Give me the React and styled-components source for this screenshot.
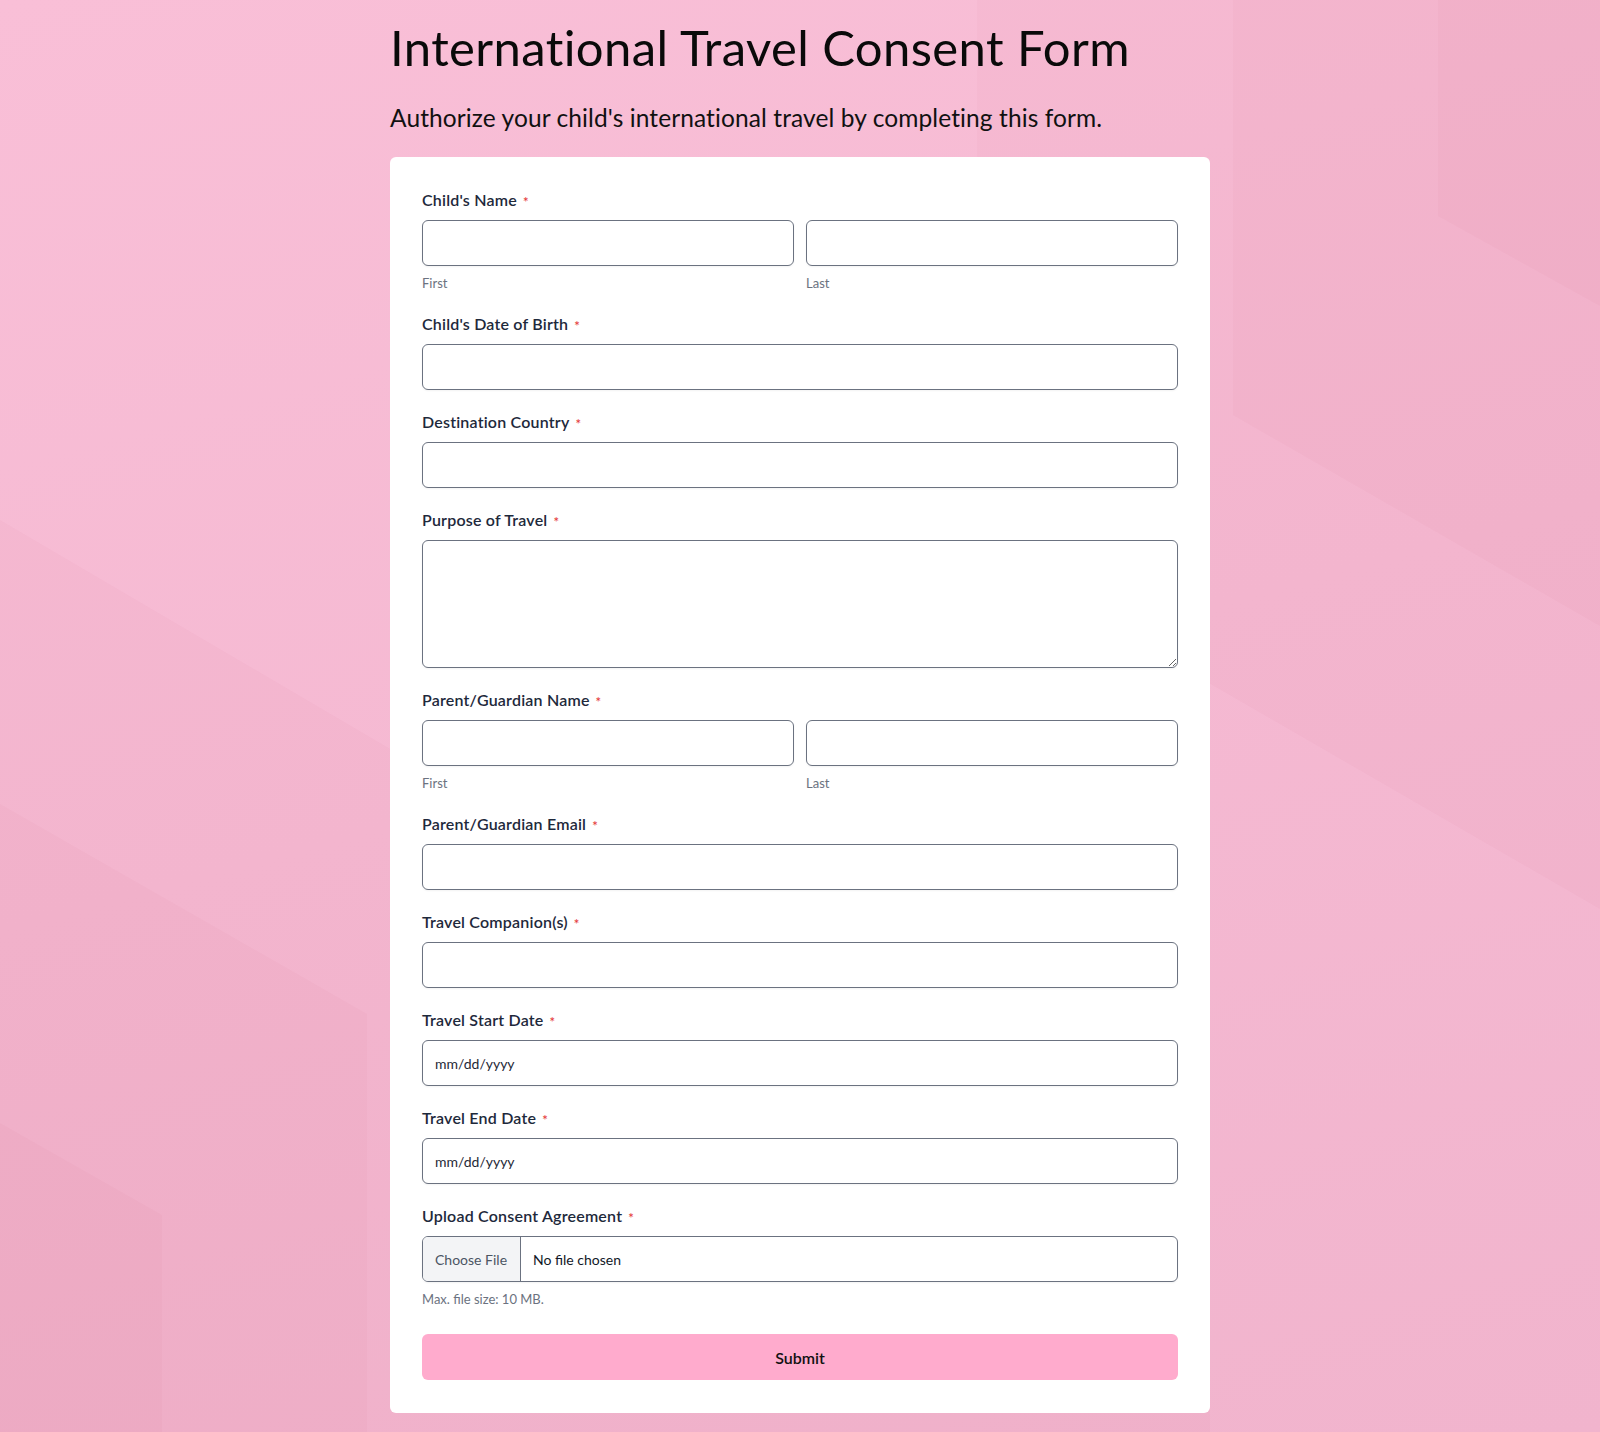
import React from 'react';
import styled, { createGlobalStyle } from 'styled-components';

const GlobalStyle = createGlobalStyle`
  * { box-sizing: border-box; }
  body {
    margin: 0;
    font-family: Lato, "Noto Sans", sans-serif;
    color: #1e293b;
  }
`;

const Page = styled.div`
  position: relative;
  min-height: 1432px;
  overflow: hidden;
  background: linear-gradient(165deg, #f9bfd7 0%, #f5b9d2 50%, #f1b4cd 100%);
`;

const Backdrop = styled.svg`
  position: absolute;
  top: 0;
  left: 0;
  width: 100%;
  height: 100%;
  z-index: 0;
`;

const Wrapper = styled.div`
  position: relative;
  z-index: 1;
  width: 820px;
  margin: 0 auto;
  padding: 18px 0 18px;
`;

const Title = styled.h1`
  margin: 0 0 26px;
  font-size: 49px;
  font-weight: 400;
  line-height: 1.2;
  letter-spacing: 0.4px;
  color: #0a0a0a;
`;

const Subtitle = styled.p`
  margin: 0 0 25px;
  font-size: 24.5px;
  line-height: 1.2;
  letter-spacing: 0.1px;
  color: #111111;
`;

const Card = styled.form`
  background: #ffffff;
  border-radius: 6px;
  padding: 31px 32px 33px;
`;

const Group = styled.div`
  margin-bottom: 20px;
`;

const Label = styled.label`
  display: flex;
  align-items: center;
  height: 24px;
  margin-bottom: 8px;
  font-size: 16px;
  line-height: 24px;
  font-weight: 600;
  letter-spacing: 0.2px;
  color: #1e293b;
`;

const Star = styled.span`
  position: relative;
  top: 2px;
  margin-left: 6px;
  font-size: 13px;
  line-height: 1;
  color: #e53e3e;
`;

const Row = styled.div`
  display: grid;
  grid-template-columns: 1fr 1fr;
  gap: 12px;
`;

const Input = styled.input`
  display: block;
  width: 100%;
  height: 46px;
  padding: 0 12px;
  border: 1px solid #6b7280;
  border-radius: 6px;
  box-shadow: 0 1px 2px rgba(0, 0, 0, 0.05);
  font-family: inherit;
  font-size: 14px;
  color: #1f2937;
  background: #fff;
  outline: none;

  &::placeholder {
    color: #1f2937;
  }
`;

const TextArea = styled.textarea`
  display: block;
  width: 100%;
  height: 128px;
  padding: 10px 12px;
  border: 1px solid #6b7280;
  border-radius: 6px;
  box-shadow: 0 1px 2px rgba(0, 0, 0, 0.05);
  font-family: inherit;
  font-size: 14px;
  outline: none;
`;

const Sub = styled.div`
  margin-top: 8px;
  font-size: 13px;
  line-height: 18px;
  color: #6b7280;
`;

const FileBox = styled.div`
  display: flex;
  height: 46px;
  border: 1px solid #6b7280;
  border-radius: 6px;
  overflow: hidden;
  box-shadow: 0 1px 2px rgba(0, 0, 0, 0.05);
  font-size: 14px;
`;

const ChooseButton = styled.span`
  display: flex;
  align-items: center;
  padding: 0 13px 0 12px;
  background: #f3f4f6;
  border-right: 1px solid #6b7280;
  color: #4b5563;
`;

const FileName = styled.span`
  display: flex;
  align-items: center;
  padding-left: 12px;
  color: #111827;
`;

const Submit = styled.button`
  display: block;
  width: 100%;
  height: 46px;
  margin-top: 26px;
  border: none;
  border-radius: 6px;
  background: #ffabcd;
  font-family: inherit;
  font-size: 16px;
  font-weight: 600;
  color: #111111;
`;

function Field({ label, sub, children }) {
  return (
    <Group>
      <Label>
        {label}
        <Star>*</Star>
      </Label>
      {children}
      {sub && <Sub>{sub}</Sub>}
    </Group>
  );
}

function NameField({ label }) {
  return (
    <Group>
      <Label>
        {label}
        <Star>*</Star>
      </Label>
      <Row>
        <div>
          <Input type="text" />
          <Sub>First</Sub>
        </div>
        <div>
          <Input type="text" />
          <Sub>Last</Sub>
        </div>
      </Row>
    </Group>
  );
}

const shapes = [
  '977,0 1600,0 1600,909 977,549',
  '1233,0 1600,0 1600,626 1233,415',
  '1438,0 1600,0 1600,306 1438,216',
  '0,520 1210,1230 1210,1432 0,1432',
  '0,804 367,1014 367,1432 0,1432',
  '0,1123 162,1215 162,1432 0,1432',
];

export default function App() {
  return (
    <Page>
      <GlobalStyle />
      <Backdrop viewBox="0 0 1600 1432" preserveAspectRatio="none">
        {shapes.map((p) => (
          <polygon key={p} points={p} fill="#b8336f" fillOpacity="0.03" />
        ))}
      </Backdrop>
      <Wrapper>
        <Title>International Travel Consent Form</Title>
        <Subtitle>Authorize your child's international travel by completing this form.</Subtitle>
        <Card onSubmit={(e) => e.preventDefault()}>
          <NameField label="Child's Name" />
          <Field label="Child's Date of Birth">
            <Input type="text" />
          </Field>
          <Field label="Destination Country">
            <Input type="text" />
          </Field>
          <Field label="Purpose of Travel">
            <TextArea />
          </Field>
          <NameField label="Parent/Guardian Name" />
          <Field label="Parent/Guardian Email">
            <Input type="email" />
          </Field>
          <Field label="Travel Companion(s)">
            <Input type="text" />
          </Field>
          <Field label="Travel Start Date">
            <Input type="text" placeholder="mm/dd/yyyy" />
          </Field>
          <Field label="Travel End Date">
            <Input type="text" placeholder="mm/dd/yyyy" />
          </Field>
          <Field label="Upload Consent Agreement" sub="Max. file size: 10 MB.">
            <FileBox>
              <ChooseButton>Choose File</ChooseButton>
              <FileName>No file chosen</FileName>
            </FileBox>
          </Field>
          <Submit type="submit">Submit</Submit>
        </Card>
      </Wrapper>
    </Page>
  );
}
